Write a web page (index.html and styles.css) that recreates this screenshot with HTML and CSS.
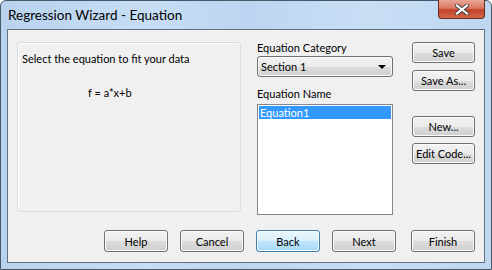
FILE: index.html
```html
<html>
<head>
    <title>Regression Wizard - Equation</title>
    <link rel="stylesheet" href="styles.css">
</head>
<body>
    <div class="window">
        <div class="titlebar">
            <span class="title">Regression Wizard - Equation</span>
            <div class="close-btn">
                <svg width="14" height="11" viewBox="0 0 14 11">
                    <path d="M2 1.5 L12 9.5 M12 1.5 L2 9.5" stroke="#3a3a3a" stroke-width="4" stroke-linecap="square"/>
                    <path d="M2 1.5 L12 9.5 M12 1.5 L2 9.5" stroke="#ffffff" stroke-width="2.2" stroke-linecap="square"/>
                </svg>
            </div>
        </div>
        <div class="client">
            <div class="top-row">
                <div class="group-box">
                    <p class="prompt">Select the equation to fit your data</p>
                    <p class="formula">f = a*x+b</p>
                </div>
                <div class="middle-col">
                    <label class="field-label">Equation Category</label>
                    <div class="combo">
                        <span>Section 1</span>
                        <span class="combo-arrow"></span>
                    </div>
                    <label class="field-label name-label">Equation Name</label>
                    <div class="listbox">
                        <div class="list-item selected">Equation1</div>
                    </div>
                </div>
                <div class="right-col">
                    <button class="btn">Save</button>
                    <button class="btn save-as">Save As...</button>
                    <button class="btn new">New...</button>
                    <button class="btn edit-code">Edit Code...</button>
                </div>
            </div>
            <div class="bottom-row">
                <button class="btn">Help</button>
                <button class="btn">Cancel</button>
                <button class="btn default">Back</button>
                <button class="btn">Next</button>
                <button class="btn finish">Finish</button>
            </div>
        </div>
    </div>
</body>
</html>
```

FILE: styles.css
```css
body {
    margin: 0;
    background-color: #ffffff;
    font-family: Lato, "Open Sans", sans-serif;
    font-size: 11px;
    color: #000;
}

.window {
    width: 490px;
    height: 268px;
    border: 1px solid #4a5766;
    border-radius: 6px 6px 0 0;
    background: linear-gradient(to right, #b9d3ee 0%, #c6ddf5 30%, #bcd6f1 50%, #c8def5 75%, #bdd7f1 100%);
    display: flex;
    flex-direction: column;
}

.titlebar {
    height: 28px;
    display: flex;
    justify-content: space-between;
    align-items: flex-start;
    padding: 0 6px 0 7px;
}

.title {
    font-size: 13.5px;
    margin-top: 6px;
    color: #000;
}

.close-btn {
    width: 45px;
    height: 18px;
    margin-top: -1px;
    border: 1px solid #6c2b20;
    border-top: none;
    border-radius: 0 0 4px 4px;
    background: linear-gradient(to bottom, #e9a696 0%, #d97a62 45%, #c2432b 55%, #d0664a 100%);
    display: flex;
    align-items: center;
    justify-content: center;
}

.client {
    flex: 1;
    margin: 0 6px 6px 6px;
    border: 1px solid #63717f;
    background-color: #f0f0f0;
    display: flex;
    flex-direction: column;
}

.top-row {
    display: flex;
    align-items: flex-start;
    padding: 12px 0 0 9px;
}

.group-box {
    width: 222px;
    height: 168px;
    border: 1px solid #d5dfe5;
    border-radius: 3px;
    box-shadow: inset 1px 1px 0 #ffffff;
}

.prompt {
    margin: 9px 0 0 4px;
}

.formula {
    margin: 21px 0 0 0;
    padding-left: 70px;
}

.middle-col {
    width: 136px;
    margin-left: 16px;
    display: flex;
    flex-direction: column;
}

.field-label {
    line-height: 14px;
    height: 14px;
    margin-top: -1px;
}

.name-label {
    margin-top: 10px;
}

.combo {
    height: 19px;
    margin-top: 1px;
    border: 1px solid #707070;
    border-radius: 3px;
    background: linear-gradient(to bottom, #f2f2f2 0%, #ebebeb 50%, #dddddd 51%, #cfcfcf 100%);
    box-shadow: inset 0 0 0 1px #fbfbfb;
    display: flex;
    align-items: center;
    justify-content: space-between;
    padding: 0 6px 0 3px;
}

.combo-arrow {
    width: 0;
    height: 0;
    border-left: 4px solid transparent;
    border-right: 4px solid transparent;
    border-top: 4px solid #000;
}

.listbox {
    height: 107px;
    margin-top: 3px;
    border: 1px solid #828790;
    background-color: #ffffff;
    padding: 1px;
}

.list-item {
    height: 13px;
    line-height: 13px;
    padding-left: 1px;
}

.list-item.selected {
    background-color: #3399ff;
    color: #ffffff;
}

.right-col {
    width: 63px;
    margin-left: 19px;
    display: flex;
    flex-direction: column;
}

.btn {
    font-family: Lato, "Open Sans", sans-serif;
    font-size: 11px;
    color: #000;
    height: 21px;
    padding: 0;
    white-space: nowrap;
    border: 1px solid #707070;
    border-radius: 3px;
    background: linear-gradient(to bottom, #f2f2f2 0%, #ebebeb 50%, #dddddd 51%, #cfcfcf 100%);
    box-shadow: inset 0 0 0 1px #fcfcfc;
}

.btn.default {
    border-color: #3c7fb1;
    background: linear-gradient(to bottom, #eaf6fd 0%, #d9f0fc 50%, #bee6fd 51%, #a7d9f5 100%);
}

.right-col .btn {
    width: 63px;
}

.save-as {
    margin-top: 7px;
}

.new {
    margin-top: 25px;
}

.edit-code {
    margin-top: 6px;
}

.bottom-row {
    margin-top: auto;
    display: flex;
    gap: 12px;
    padding: 0 0 10px 96px;
}

.bottom-row .btn {
    width: 64px;
    height: 22px;
}

.bottom-row .finish {
    margin-left: 3px;
}
```
